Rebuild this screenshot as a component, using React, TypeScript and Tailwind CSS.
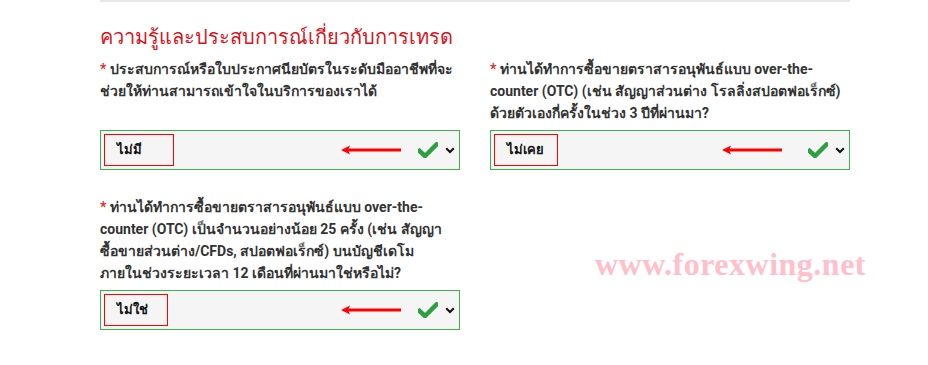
import React from 'react';

function Arrow() {
  return (
    <svg width="62" height="10" viewBox="0 0 62 10" className="shrink-0">
      <line x1="6" y1="5" x2="60" y2="5" stroke="#ff0000" strokeWidth="3" />
      <path d="M0 5 L9 0.5 L7 5 L9 9.5 Z" fill="#ff0000" />
    </svg>
  );
}

function Check() {
  return (
    <svg width="20" height="16" viewBox="0 0 20 16" className="shrink-0">
      <path d="M1.5 9 L7 14 L18.5 2.5" fill="none" stroke="#2ea043" strokeWidth="4.5" strokeLinecap="square" />
    </svg>
  );
}

function Chevron() {
  return (
    <svg width="10" height="7" viewBox="0 0 10 7" className="shrink-0">
      <path d="M1.2 1.2 L5 5 L8.8 1.2" fill="none" stroke="#111" strokeWidth="2" />
    </svg>
  );
}

function SelectBox({ value, boxW, arrowGap }: { value: string; boxW: string; arrowGap: string }) {
  return (
    <div className="flex h-[40px] items-center border border-[#3cb34a] bg-[#f5f5f5] pl-[3px] pr-[4px]">
      <div className={`flex h-[32px] ${boxW} items-center border border-[#ff0000] pl-[12px] text-[13px] font-bold text-[#111]`}>
        {value}
      </div>
      <div className="flex-1" />
      <Arrow />
      <div className={arrowGap} />
      <Check />
      <div className="w-[7px]" />
      <Chevron />
    </div>
  );
}

function Star() {
  return <span className="text-[#e0282e]">* </span>;
}

export default function App() {
  return (
    <div className="h-[365px] w-[928px] bg-white" style={{ fontFamily: 'Roboto, "Noto Sans", "DejaVu Sans", sans-serif' }}>
      <div className="ml-[100px] w-[750px]">
        <div className="h-[2px] bg-[#e8e8e8]" />
        <h2 className="mt-[20px] text-[20px] leading-[30px] text-[#d7141e]">ความรู้และประสบการณ์เกี่ยวกับการเทรด</h2>

        <div className="mt-[6px] grid grid-cols-[360px_360px] gap-x-[30px]">
          <div className="flex flex-col">
            <p className="h-[72px] text-[14px] font-semibold leading-[22px] text-[#333]">
              <Star />ประสบการณ์หรือใบประกาศนียบัตรในระดับมืออาชีพที่จะ<br />ช่วยให้ท่านสามารถเข้าใจในบริการของเราได้
            </p>
            <SelectBox value="ไม่มี" boxW="w-[70px]" arrowGap="w-[15px]" />
          </div>
          <div className="flex flex-col">
            <p className="h-[72px] text-[14px] font-bold leading-[22px] text-[#333]">
              <Star />ท่านได้ทำการซื้อขายตราสารอนุพันธ์แบบ over-the-<br />counter (OTC) (เช่น สัญญาส่วนต่าง โรลลิ่งสปอตฟอเร็กซ์)<br />ด้วยตัวเองกี่ครั้งในช่วง 3 ปีที่ผ่านมา?
            </p>
            <SelectBox value="ไม่เคย" boxW="w-[64px]" arrowGap="w-[24px]" />
          </div>

          <div className="mt-[26px] flex flex-col">
            <p className="h-[94px] text-[14px] font-bold leading-[22px] text-[#333]">
              <Star />ท่านได้ทำการซื้อขายตราสารอนุพันธ์แบบ over-the-<br />counter (OTC) เป็นจำนวนอย่างน้อย 25 ครั้ง (เช่น สัญญา<br />ซื้อขายส่วนต่าง/CFDs, สปอตฟอเร็กซ์) บนบัญชีเดโม<br />ภายในช่วงระยะเวลา 12 เดือนที่ผ่านมาใช่หรือไม่?
            </p>
            <SelectBox value="ไม่ใช่" boxW="w-[64px]" arrowGap="w-[15px]" />
          </div>
          <div className="mt-[26px] flex items-start justify-end pt-[53px]">
            <span
              className="mr-[-16px] text-[32px] font-bold leading-[30px] tracking-[0.5px] text-[#ffc0cb]"
              style={{ fontFamily: '"Liberation Serif", "Times New Roman", serif' }}
            >
              www.forexwing.net
            </span>
          </div>
        </div>
      </div>
    </div>
  );
}
